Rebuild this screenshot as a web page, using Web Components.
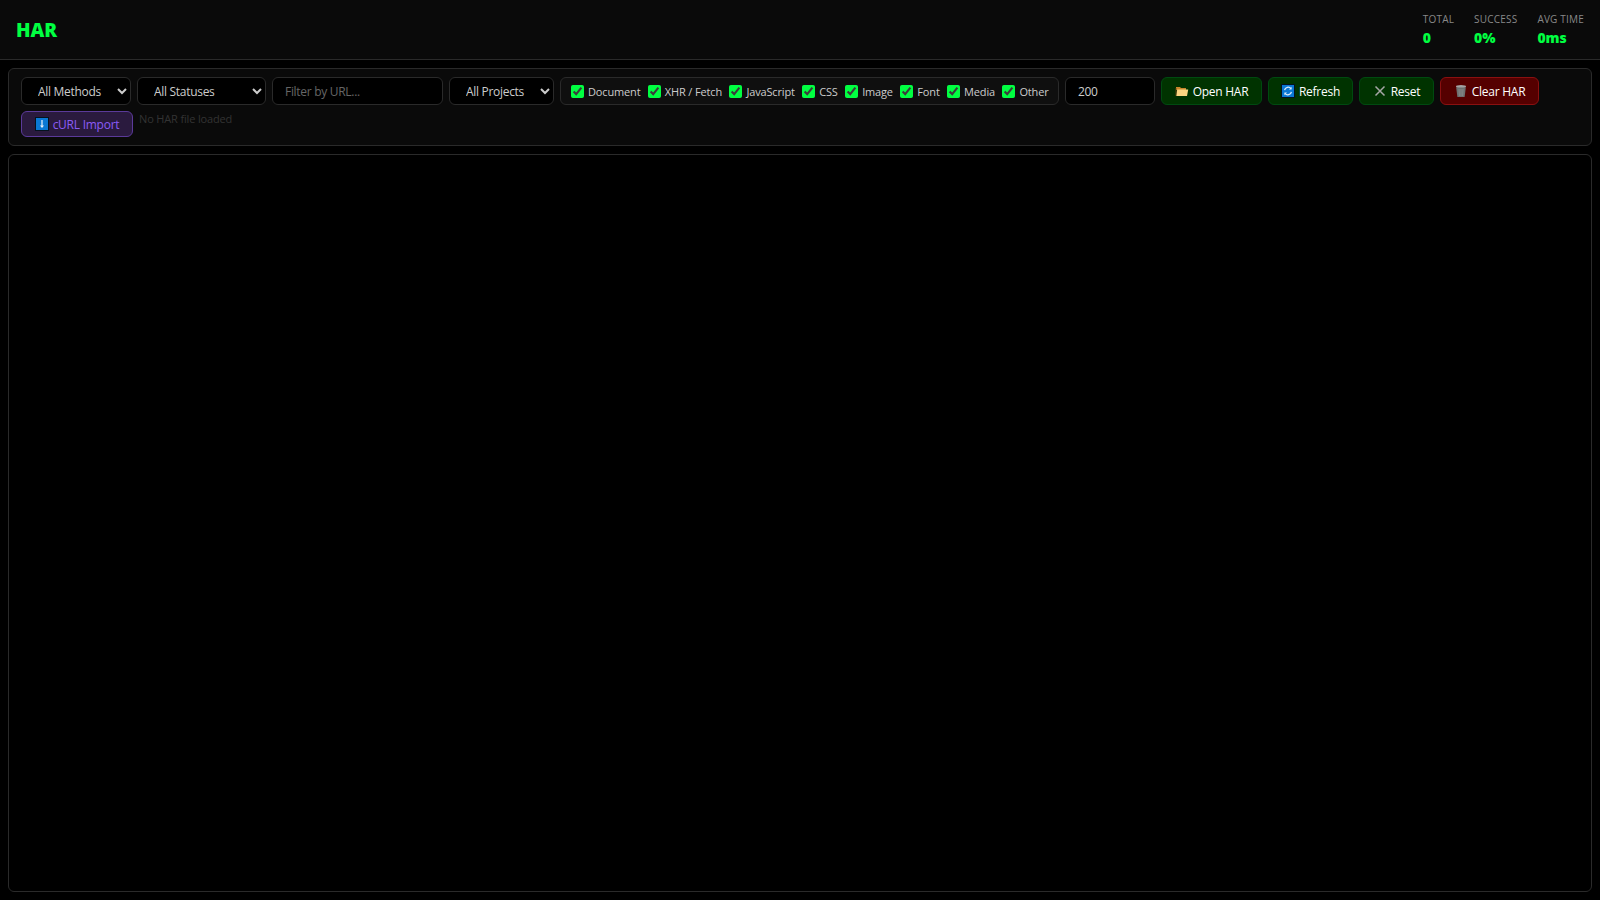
<!DOCTYPE html>
<html lang="en">
<head>
<meta charset="utf-8">
<title>HAR</title>
<style>
  html, body { margin: 0; height: 100%; background: #000; color-scheme: dark; }
  body { font-family: "Open Sans", "Liberation Sans", sans-serif; }
</style>
</head>
<body>
<har-app>
  <har-header slot="header">
    <har-stat label="Total" value="0"></har-stat>
    <har-stat label="Success" value="0%"></har-stat>
    <har-stat label="Avg Time" value="0ms"></har-stat>
  </har-header>
  <har-toolbar slot="toolbar">
    <har-select width="110" options="All Methods"></har-select>
    <har-select width="129" options="All Statuses"></har-select>
    <har-input width="171" placeholder="Filter by URL..."></har-input>
    <har-select width="105" options="All Projects"></har-select>
    <har-types>
      <har-check>Document</har-check>
      <har-check>XHR / Fetch</har-check>
      <har-check>JavaScript</har-check>
      <har-check>CSS</har-check>
      <har-check>Image</har-check>
      <har-check>Font</har-check>
      <har-check>Media</har-check>
      <har-check>Other</har-check>
    </har-types>
    <har-input width="90" value="200"></har-input>
    <har-button width="101">
      <svg slot="icon" width="14" height="14" viewBox="0 0 14 14"><path d="M1 4V3h4l1 1h5v2H1z" fill="#c8862c"/><path d="M1 12 2.2 5.6h11L12 12z" fill="#fcd681"/><path d="M1 4v8" stroke="#6b4513" stroke-width=".8"/></svg>
      Open HAR
    </har-button>
    <har-button width="85">
      <svg slot="icon" width="14" height="14" viewBox="0 0 14 14"><rect x=".5" y=".5" width="13" height="13" fill="#0a78d4" stroke="#04121f"/><path d="M3.6 6.2A3.6 3.6 0 0 1 10 4.6M10.4 7.8A3.6 3.6 0 0 1 4 9.4" fill="none" stroke="#dcecfa" stroke-width="1.3"/><path d="M10.6 2.8v2.6H8zM3.4 11.2V8.6H6z" fill="#dcecfa"/></svg>
      Refresh
    </har-button>
    <har-button width="75">
      <svg slot="icon" width="14" height="14" viewBox="0 0 14 14"><path d="M2.5 2.5l9 9M11.5 2.5l-9 9" stroke="#a6a6a6" stroke-width="1.5" fill="none"/></svg>
      Reset
    </har-button>
    <har-button width="99" kind="danger">
      <svg slot="icon" width="14" height="14" viewBox="0 0 14 14"><ellipse cx="7" cy="2.6" rx="5" ry="1.5" fill="#a3a3a3"/><path d="M2.2 3.4 3.4 13h7.2l1.2-9.6z" fill="#6d7070"/><path d="M5 5l.4 7M7 5v7M9 5l-.4 7" stroke="#8f9393" stroke-width=".7"/></svg>
      Clear HAR
    </har-button>
    <har-button width="112" height="26" kind="purple">
      <svg slot="icon" width="14" height="14" viewBox="0 0 14 14"><rect x=".5" y=".5" width="13" height="13" fill="#0a78d4" stroke="#04121f"/><path d="M7 3v7" stroke="#e6f2fc" stroke-width="1.2"/><path d="M5 8.5h4L7 11z" fill="#e6f2fc"/></svg>
      cURL Import
    </har-button>
    <har-note>No HAR file loaded</har-note>
  </har-toolbar>
  <har-panel slot="main"></har-panel>
</har-app>

<script>
// page shell: header on top, toolbar, then the big panel takes what is left
class HarApp extends HTMLElement {
  constructor() {
    super();
    this.attachShadow({ mode: "open" });
    this.shadowRoot.innerHTML = `
      <style>
        :host { display: flex; flex-direction: column; height: 100vh; box-sizing: border-box; }
        .content { flex: 1; min-height: 0; display: flex; flex-direction: column; gap: 8px; padding: 8px; }
        ::slotted([slot="main"]) { flex: 1; }
      </style>
      <slot name="header"></slot>
      <div class="content">
        <slot name="toolbar"></slot>
        <slot name="main"></slot>
      </div>
    `;
  }
}

class HarHeader extends HTMLElement {
  constructor() {
    super();
    this.attachShadow({ mode: "open" });
    this.shadowRoot.innerHTML = `
      <style>
        :host { display: flex; align-items: center; justify-content: space-between; height: 60px; box-sizing: border-box;
          padding: 0 16px; background: #0a0a0a; border-bottom: 1px solid #2a2a2a; }
        h1 { margin: 2px 0 0; font-size: 19px; line-height: 1; font-weight: 800; color: #00ff41; }
        .stats { display: flex; gap: 20px; }
      </style>
      <h1>HAR</h1>
      <div class="stats"><slot></slot></div>
    `;
  }
}

class HarStat extends HTMLElement {
  constructor() {
    super();
    this.attachShadow({ mode: "open" });
    this.shadowRoot.innerHTML = `
      <style>
        :host { display: flex; flex-direction: column; gap: 2px; }
        .label { font-size: 10px; line-height: 14px; letter-spacing: .2px; text-transform: uppercase; color: #888; }
        .value { font-size: 14px; line-height: 19px; font-weight: 800; color: #00ff41; }
      </style>
      <span class="label">${this.getAttribute("label")}</span>
      <span class="value">${this.getAttribute("value")}</span>
    `;
  }
}

class HarToolbar extends HTMLElement {
  constructor() {
    super();
    this.attachShadow({ mode: "open" });
    this.shadowRoot.innerHTML = `
      <style>
        :host { display: flex; flex-wrap: wrap; align-items: flex-start; gap: 6px; box-sizing: border-box; height: 78px;
          padding: 8px 12px; background: #0a0a0a; border: 1px solid #2a2a2a; border-radius: 6px; }
      </style>
      <slot></slot>
    `;
  }
}

class HarSelect extends HTMLElement {
  constructor() {
    super();
    this.attachShadow({ mode: "open" });
    this.shadowRoot.innerHTML = `
      <style>
        :host { display: block; }
        select { display: block; box-sizing: border-box; height: 28px; padding: 0 0 0 12px; color-scheme: dark;
          width: ${this.getAttribute("width")}px; font: 12px "Open Sans", "Liberation Sans", sans-serif; letter-spacing: -.3px; color: #ccc;
          background: #000; border: 1px solid #2a2a2a; border-radius: 6px; }
      </style>
      <select><option>${this.getAttribute("options")}</option></select>
    `;
  }
}

class HarInput extends HTMLElement {
  constructor() {
    super();
    this.attachShadow({ mode: "open" });
    const placeholder = this.getAttribute("placeholder") || "";
    const value = this.getAttribute("value") || "";
    this.shadowRoot.innerHTML = `
      <style>
        :host { display: block; }
        input { display: block; box-sizing: border-box; height: 28px; padding: 0 12px; width: ${this.getAttribute("width")}px;
          font: 12px "Open Sans", "Liberation Sans", sans-serif; letter-spacing: -.3px; color: #ccc; background: #000; outline: 0;
          border: 1px solid #2a2a2a; border-radius: 6px; }
        input::placeholder { color: #666; opacity: 1; }
      </style>
      <input placeholder="${placeholder}" value="${value}">
    `;
  }
}

class HarTypes extends HTMLElement {
  constructor() {
    super();
    this.attachShadow({ mode: "open" });
    this.shadowRoot.innerHTML = `
      <style>
        :host { display: flex; align-items: center; gap: 7.4px; box-sizing: border-box; height: 28px; width: 499px; padding: 0 10px;
          border: 1px solid #2a2a2a; border-radius: 6px; background: #0f0f0f; }
      </style>
      <slot></slot>
    `;
  }
}

class HarCheck extends HTMLElement {
  constructor() {
    super();
    this.attachShadow({ mode: "open" });
    this.shadowRoot.innerHTML = `
      <style>
        :host { display: block; }
        label { display: flex; align-items: center; gap: 4px; font-size: 11px; letter-spacing: -.15px; color: #ccc; white-space: nowrap; }
        input { width: 13px; height: 13px; margin: 0; accent-color: #00ff41; color-scheme: dark; }
      </style>
      <label><input type="checkbox" checked><span><slot></slot></span></label>
    `;
  }
}

class HarButton extends HTMLElement {
  constructor() {
    super();
    this.attachShadow({ mode: "open" });
    this.shadowRoot.innerHTML = `
      <style>
        :host { display: block; }
        button { display: flex; align-items: center; justify-content: center; gap: 4px; box-sizing: border-box; padding: 0;
          width: ${this.getAttribute("width")}px; height: ${this.getAttribute("height") || 28}px;
          font: 12px "Open Sans", "Liberation Sans", sans-serif; letter-spacing: -.25px; color: #fff; background: #003300;
          border: 1px solid #004a10; border-radius: 6px; }
        :host([kind="danger"]) button { background: #550000; border-color: #8a1010; }
        :host([kind="purple"]) button { background: #2a1a3e; border-color: #5b3a9a; color: #8b5cf6; }
        ::slotted(svg) { display: block; flex: none; }
      </style>
      <button><slot name="icon"></slot><span><slot></slot></span></button>
    `;
  }
}

class HarNote extends HTMLElement {
  constructor() {
    super();
    this.attachShadow({ mode: "open" });
    this.shadowRoot.innerHTML = `
      <style>
        :host { display: block; font-size: 11px; line-height: 15px; letter-spacing: -.15px; color: #333; }
      </style>
      <slot></slot>
    `;
  }
}

class HarPanel extends HTMLElement {
  constructor() {
    super();
    this.attachShadow({ mode: "open" });
    this.shadowRoot.innerHTML = `
      <style>
        :host { display: block; min-height: 0; background: #000; border: 1px solid #2a2a2a; border-radius: 6px; }
      </style>
    `;
  }
}

customElements.define("har-app", HarApp);
customElements.define("har-header", HarHeader);
customElements.define("har-stat", HarStat);
customElements.define("har-toolbar", HarToolbar);
customElements.define("har-select", HarSelect);
customElements.define("har-input", HarInput);
customElements.define("har-types", HarTypes);
customElements.define("har-check", HarCheck);
customElements.define("har-button", HarButton);
customElements.define("har-note", HarNote);
customElements.define("har-panel", HarPanel);
</script>
</body>
</html>
